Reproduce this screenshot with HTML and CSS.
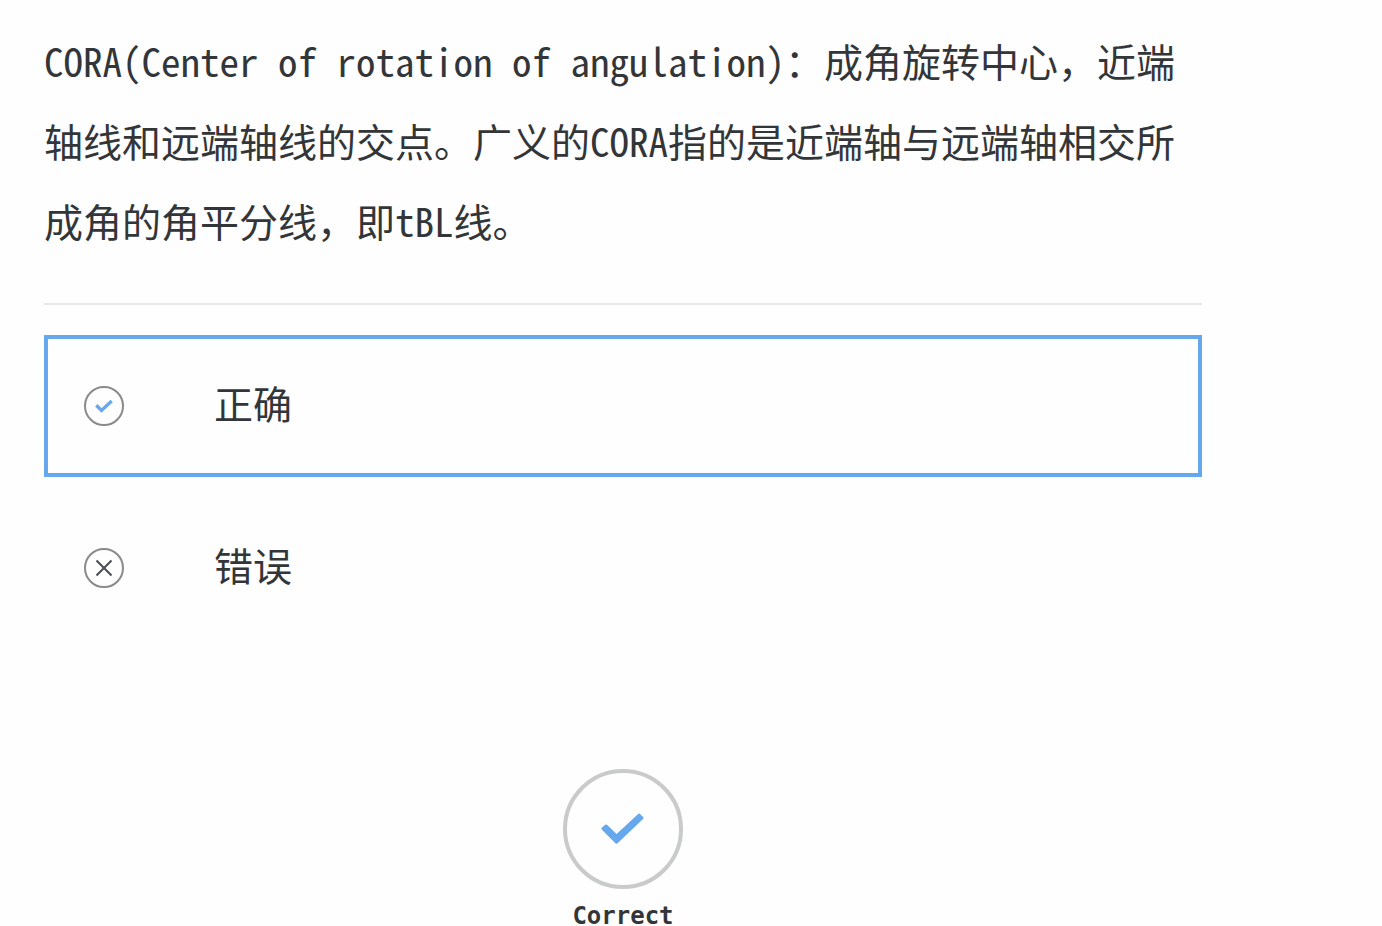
FILE: index.html
```html
<!DOCTYPE html>
<html lang="zh-CN">
<head>
<meta charset="utf-8">
<meta name="viewport" content="width=device-width, initial-scale=1">
<title>CORA</title>
<link rel="stylesheet" href="styles.css">
</head>
<body>
<main class="quiz">
  <form class="question">
    <p class="prompt" id="prompt">CORA(Center of rotation of angulation)：成角旋转中心，近端轴线和远端轴线的交点。广义的CORA指的是近端轴与远端轴相交所成角的角平分线，即tBL线。</p>
    <div class="options" role="radiogroup" aria-labelledby="prompt">
      <label class="option">
        <span class="mark">
          <input class="radio" type="radio" name="answer" value="true" checked>
          <svg class="icon icon-check" viewBox="0 0 40 40" aria-hidden="true"><path d="M12.3 19.2l5.2 5.2 10.2-9.4"/></svg>
        </span>
        <span class="option-text">正确</span>
      </label>
      <label class="option">
        <span class="mark">
          <input class="radio" type="radio" name="answer" value="false">
          <svg class="icon icon-cross" viewBox="0 0 40 40" aria-hidden="true"><path d="M12.5 12.5l15 15M27.5 12.5l-15 15"/></svg>
        </span>
        <span class="option-text">错误</span>
      </label>
    </div>
  </form>
  <div class="result" role="status">
    <svg class="result-icon" viewBox="0 0 120 120" aria-hidden="true">
      <circle class="ring" cx="60" cy="60" r="58"/>
      <path class="tick" d="M40 59.6L43.2 57L53.5 67L76.2 46.2L79 49L53.5 73.2Z"/>
    </svg>
    <span class="result-text">Correct</span>
  </div>
</main>
</body>
</html>
```
FILE: styles.css
```css
* {
  box-sizing: border-box;
}

body {
  margin: 0;
  background: #fefefe;
  color: #333639;
  font-family: "Noto Sans Mono CJK SC", "Noto Sans CJK SC", sans-serif;
  font-size: 39px;
}

.quiz {
  padding: 20px 180px 0 44px;
}

.prompt {
  margin: 0;
  padding-bottom: 43px;
  border-bottom: 2px solid #e8e8e8;
  line-height: 80px;
}

.options {
  display: grid;
  gap: 20px;
  padding-top: 30px;
}

.option {
  display: flex;
  align-items: center;
  gap: 90px;
  padding: 27px 36px;
  border: 4px solid transparent;
  cursor: pointer;
}

.option:has(.radio:checked) {
  border-color: #66a8ed;
}

.option-text {
  padding-bottom: 8px;
  line-height: 72px;
}

.mark {
  display: grid;
  width: 40px;
  height: 40px;
}

.radio,
.icon {
  grid-area: 1 / 1;
  width: 40px;
  height: 40px;
}

.radio {
  appearance: none;
  margin: 0;
  border: 2px solid #8a8a8a;
  border-radius: 50%;
}

.icon {
  fill: none;
  pointer-events: none;
}

.icon-check {
  stroke: #66a8ed;
  stroke-width: 3.4;
}

.icon-cross {
  stroke: #484d52;
  stroke-width: 2;
}

.result {
  display: flex;
  flex-direction: column;
  align-items: center;
  gap: 18px;
  padding-top: 130px;
}

.result-icon {
  width: 120px;
  height: 120px;
}

.ring {
  fill: none;
  stroke: #c9caca;
  stroke-width: 4;
}

.tick {
  fill: #66a8ed;
  stroke: #66a8ed;
  stroke-width: 3;
  stroke-linejoin: round;
}

.result-text {
  font-family: "DejaVu Sans Mono", monospace;
  font-size: 24px;
  font-weight: 700;
  line-height: 18px;
}
```
